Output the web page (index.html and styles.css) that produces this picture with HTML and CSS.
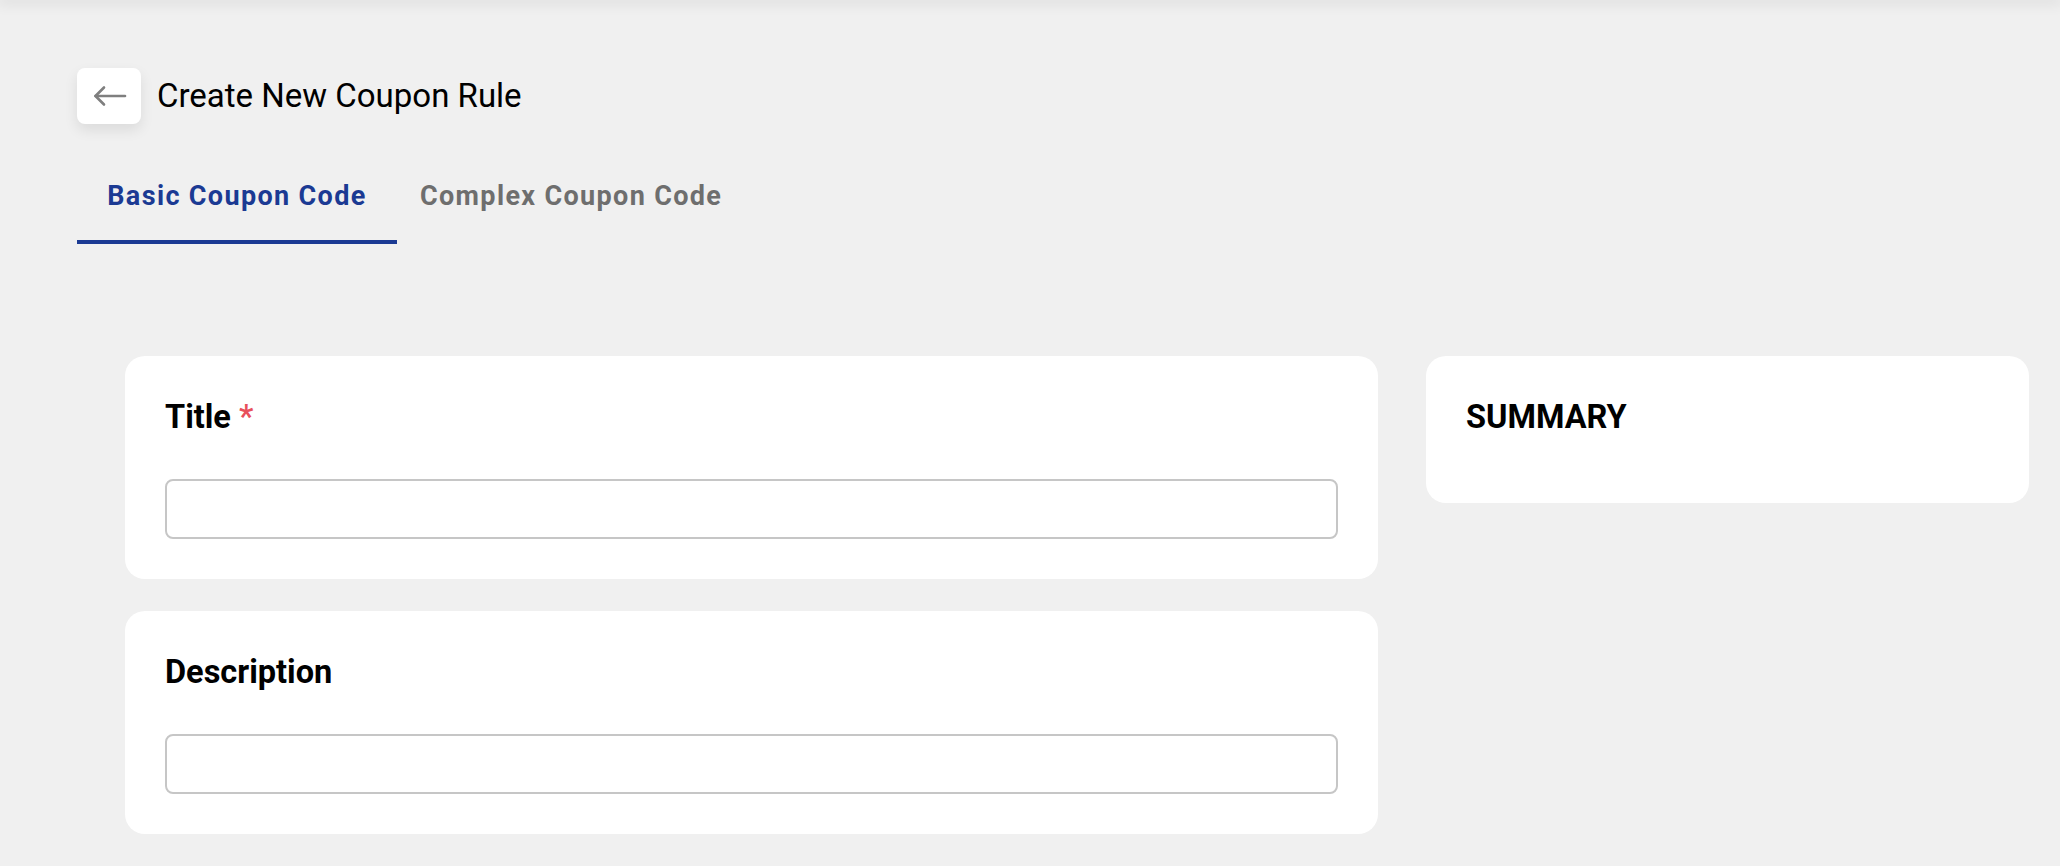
FILE: index.html
```html
<!DOCTYPE html>
<html lang="en">
<head>
<meta charset="utf-8">
<title>Create New Coupon Rule</title>
<link rel="stylesheet" href="styles.css">
</head>
<body>
<div class="topshade"></div>
<main class="page">
  <header class="page-header">
    <button class="back-btn" type="button" aria-label="Back">
      <svg width="34" height="24" viewBox="0 0 34 24" fill="none" stroke="#7f7f7f" stroke-width="2.6" stroke-linecap="round" stroke-linejoin="round">
        <line x1="32" y1="12" x2="2.5" y2="12"/>
        <polyline points="11,3.5 2.5,12 11,20.5"/>
      </svg>
    </button>
    <h1 class="page-title">Create New Coupon Rule</h1>
  </header>

  <nav class="tabs">
    <div class="tab tab-active">Basic Coupon Code</div>
    <div class="tab">Complex Coupon Code</div>
  </nav>

  <section class="content">
    <div class="form-col">
      <div class="card">
        <label class="field-label">Title <span class="req">*</span></label>
        <input class="text-input" type="text">
      </div>
      <div class="card">
        <label class="field-label">Description</label>
        <input class="text-input" type="text">
      </div>
    </div>
    <aside class="side-col">
      <div class="card summary-card">
        <h2 class="summary-title">SUMMARY</h2>
      </div>
    </aside>
  </section>
</main>
</body>
</html>
```
FILE: styles.css
```css
* { box-sizing: border-box; }
html, body { margin: 0; padding: 0; }
body {
  background: #f0f0f0;
  font-family: Roboto, "Noto Sans", "Liberation Sans", sans-serif;
  color: #000;
  min-height: 866px;
  overflow: hidden;
}
.topshade {
  height: 0;
  box-shadow: 0 0 14px 3px rgba(0,0,0,0.12);
}
.page {
  padding: 68px 31px 0 77px;
}
.page-header {
  display: flex;
  align-items: center;
  gap: 16px;
  height: 56px;
}
.back-btn {
  width: 64px;
  height: 56px;
  border: none;
  border-radius: 8px;
  background: #fff;
  box-shadow: 0 6px 14px rgba(0,0,0,0.09);
  display: flex;
  align-items: center;
  justify-content: center;
  padding: 0;
  padding-left: 2px;
  cursor: pointer;
}
.page-title {
  margin: 0;
  font-size: 33px;
  font-weight: 400;
  line-height: 1;
  color: #000;
  position: relative;
  top: -1px;
}
.tabs {
  display: flex;
  margin-top: 24px;
}
.tab {
  min-width: 320px;
  height: 96px;
  padding: 0 23px;
  display: flex;
  align-items: center;
  justify-content: center;
  font-size: 27px;
  font-weight: 700;
  letter-spacing: 1.35px;
  color: #6e6e6e;
  border-bottom: 4px solid transparent;
  padding-top: 4px;
}
.tab-active {
  color: #1b3a93;
  border-bottom-color: #1b3a93;
}
.content {
  display: grid;
  grid-template-columns: 1253fr 603fr;
  gap: 48px;
  margin-top: 112px;
  margin-left: 48px;
  align-items: start;
}
.form-col {
  display: flex;
  flex-direction: column;
  gap: 32px;
}
.card {
  background: #fff;
  border-radius: 20px;
  padding: 40px;
  display: flex;
  flex-direction: column;
  gap: 40px;
}
.field-label {
  font-size: 32.5px;
  font-weight: 700;
  line-height: 42px;
  height: 43px;
}
.req {
  color: #e8505b;
  font-weight: 500;
}
.text-input {
  height: 60px;
  width: 100%;
  border: 2px solid #c6c6c6;
  border-radius: 8px;
  background: #fff;
  font-size: 24px;
  padding: 0 16px;
  outline: none;
}
.summary-card {
  padding-bottom: 64px;
}
.summary-title {
  margin: 0;
  font-size: 32.5px;
  font-weight: 700;
  line-height: 42px;
  height: 43px;
}
```
